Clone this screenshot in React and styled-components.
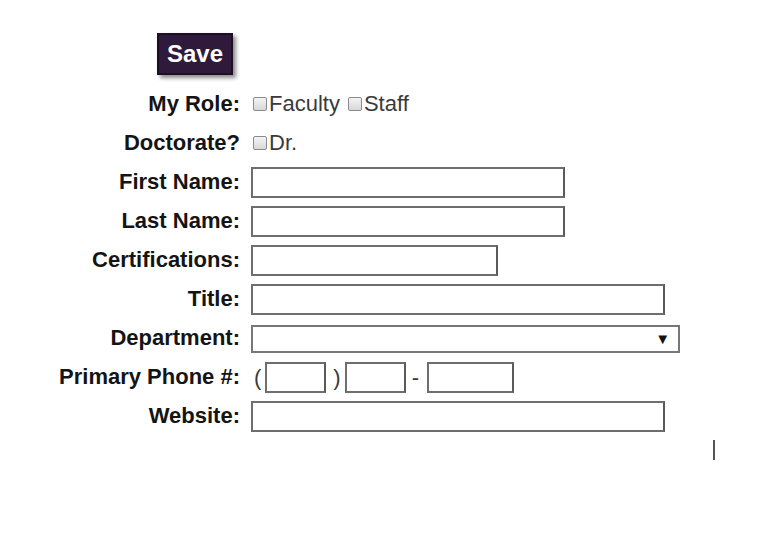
import React from 'react';
import styled, { createGlobalStyle } from 'styled-components';

const GlobalStyle = createGlobalStyle`
    body {
        margin: 0;
        background: #ffffff;
        font-family: "Liberation Sans", Arial, sans-serif;
    }
`;

const Page = styled.div`
    position: relative;
    width: 761px;
    height: 544px;
    padding-top: 33px;
    box-sizing: border-box;
`;

const SaveButton = styled.button`
    display: block;
    margin-left: 157px;
    width: 76px;
    height: 42px;
    padding: 0;
    border: 2px solid #1d0f26;
    background: #2f1a3c;
    color: #ffffff;
    font-family: "Liberation Sans", Arial, sans-serif;
    font-weight: bold;
    font-size: 24px;
    box-shadow: 3px 3px 4px rgba(0, 0, 0, 0.45);
    cursor: pointer;
`;

const Form = styled.div`
    display: grid;
    grid-template-columns: 240px 1fr;
    column-gap: 11px;
    grid-auto-rows: 39px;
    align-items: center;
    margin-top: 9px;
`;

const Label = styled.label`
    text-align: right;
    font-weight: bold;
    font-size: 22px;
    color: #141414;
    white-space: nowrap;
`;

const Field = styled.div`
    display: flex;
    align-items: center;
    padding-top: ${(p) => (p.$box ? 2 : 0)}px;
    font-size: 22px;
    color: #3a3a3a;
`;

const Check = styled.span`
    display: inline-block;
    width: 12px;
    height: 12px;
    border: 1px solid #8a8a8a;
    border-radius: 2px;
    background: linear-gradient(#f4f4f4, #d8d8d8);
    margin: 0 2px 0 2px;
`;

const Option = styled.span`
    margin-right: 6px;
`;

const TextBox = styled.input`
    box-sizing: border-box;
    width: ${(p) => p.$w}px;
    height: 31px;
    border: 2px solid #6e6e6e;
    border-right-color: #5a5a5a;
    background: #fff;
    outline: none;
    font-size: 16px;
`;

const Select = styled.div`
    box-sizing: border-box;
    width: 429px;
    height: 28px;
    border: 2px solid #777;
    display: flex;
    align-items: center;
    justify-content: flex-end;
    padding-right: 8px;
    font-size: 15px;
    color: #111;
`;

const Paren = styled.span`
    font-size: 22px;
    color: #3a3a3a;
    margin: ${(p) => p.$m};
`;

const Cursor = styled.div`
    position: absolute;
    left: 713px;
    top: 440px;
    width: 2px;
    height: 20px;
    background: #555;
`;

const App = () => {
    return (
        <Page>
            <GlobalStyle />
            <SaveButton>Save</SaveButton>
            <Form>
                <Label>My Role:</Label>
                <Field>
                    <Check />
                    <Option>Faculty</Option>
                    <Check />
                    <Option>Staff</Option>
                </Field>

                <Label>Doctorate?</Label>
                <Field>
                    <Check />
                    <Option>Dr.</Option>
                </Field>

                <Label>First Name:</Label>
                <Field $box>
                    <TextBox $w={314} />
                </Field>

                <Label>Last Name:</Label>
                <Field $box>
                    <TextBox $w={314} />
                </Field>

                <Label>Certifications:</Label>
                <Field $box>
                    <TextBox $w={247} />
                </Field>

                <Label>Title:</Label>
                <Field $box>
                    <TextBox $w={414} />
                </Field>

                <Label>Department:</Label>
                <Field $box>
                    <Select>▼</Select>
                </Field>

                <Label>Primary Phone #:</Label>
                <Field $box>
                    <Paren $m="0 4px 0 3px">(</Paren>
                    <TextBox $w={61} />
                    <Paren $m="0 4px 0 7px">)</Paren>
                    <TextBox $w={61} />
                    <Paren $m="0 8px 0 6px">-</Paren>
                    <TextBox $w={87} />
                </Field>

                <Label>Website:</Label>
                <Field $box>
                    <TextBox $w={414} />
                </Field>
            </Form>
            <Cursor />
        </Page>
    );
};

export default App;
